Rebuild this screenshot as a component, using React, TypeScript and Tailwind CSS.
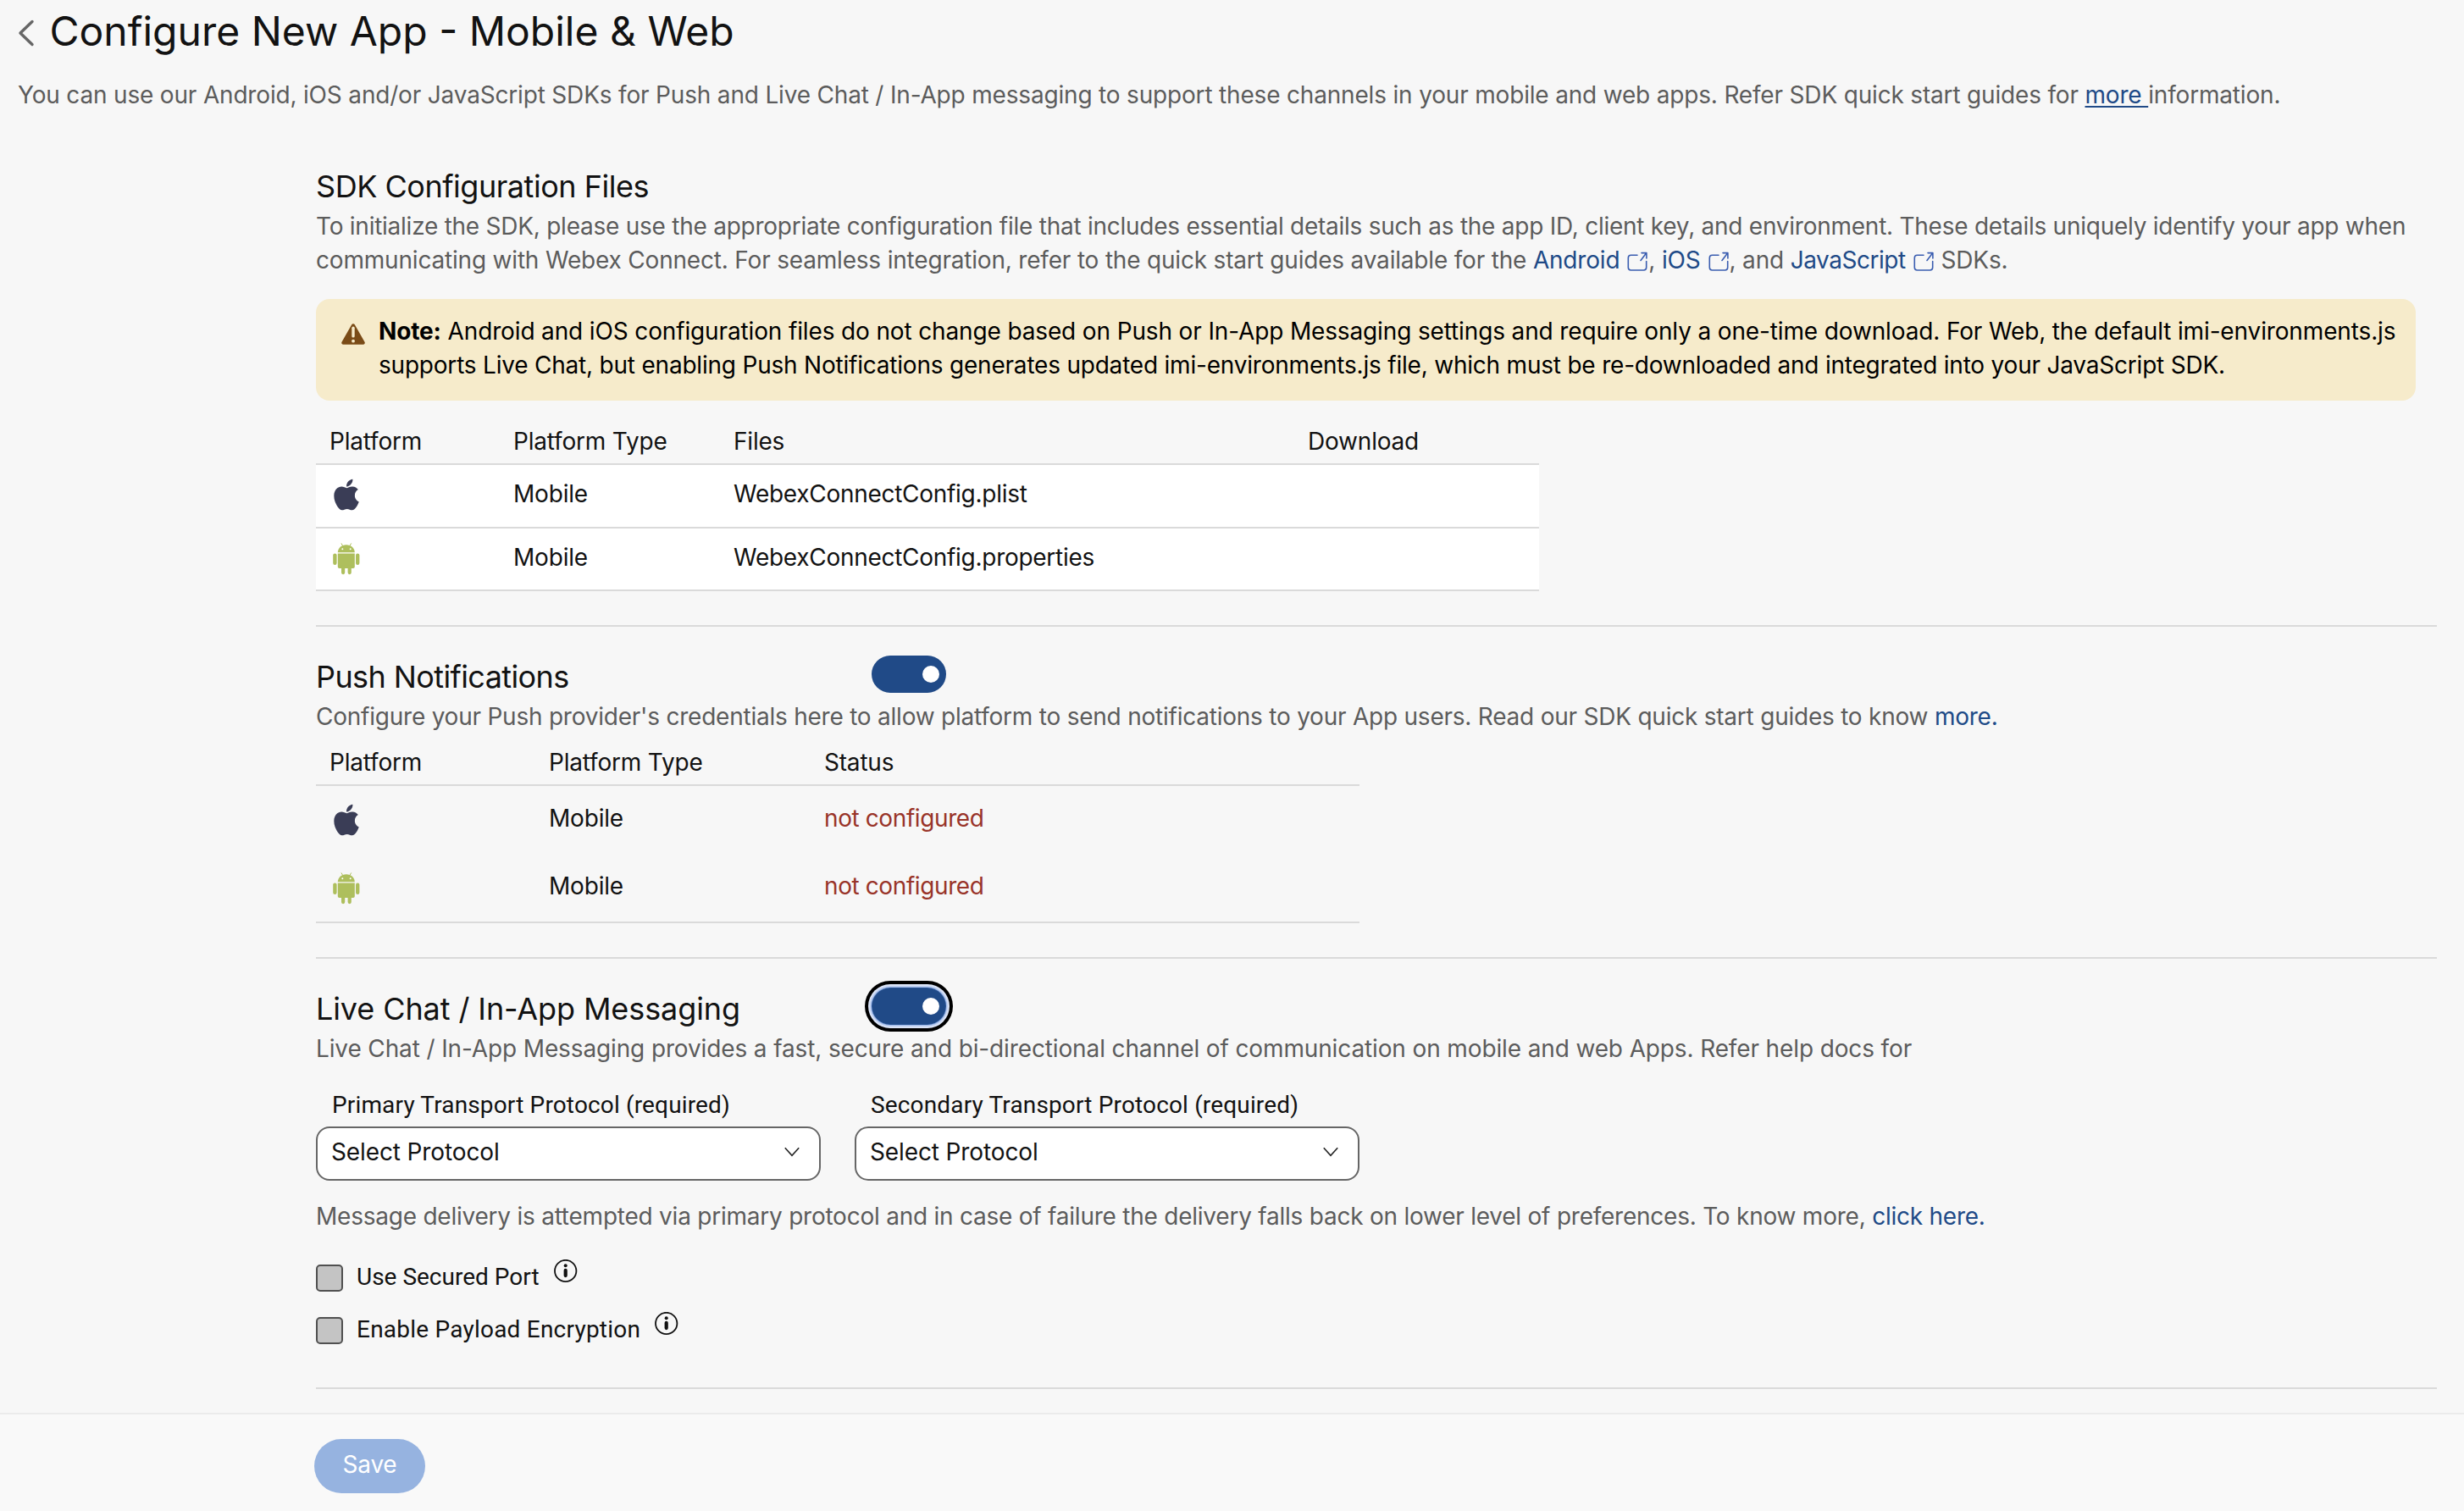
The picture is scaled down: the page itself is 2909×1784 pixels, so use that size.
import type { ReactNode } from 'react';
import { FaApple } from 'react-icons/fa';

function AppleIcon() {
  return (
    <FaApple
      className="-mt-[3px] ml-[5px] block h-[42px] w-[30px] text-[#3a3d56]"
      preserveAspectRatio="none"
    />
  );
}

function AndroidIcon() {
  return (
    <svg className="ml-1 block h-[38px] w-8 text-[#aebf5d]" viewBox="0 0 32 38" fill="currentColor">
      <path d="M5.8 11.3C5.8 6.2 10.2 2.3 15.8 2.3s10 3.9 10 9z" />
      <path d="M10.1 .8l2 3.4M21.5 .8l-2 3.4" stroke="currentColor" strokeWidth="1" strokeLinecap="round" />
      <circle cx="11.3" cy="7.3" r="1" fill="#fff" />
      <circle cx="20.7" cy="7.3" r="1" fill="#fff" />
      <path d="M5.8 12.6h20v15.6a1.8 1.8 0 0 1-1.8 1.8H7.6a1.8 1.8 0 0 1-1.8-1.8z" />
      <rect x="10" y="26" width="4.2" height="11.2" rx="2.1" />
      <rect x="17.6" y="26" width="4.2" height="11.2" rx="2.1" />
      <rect x="0.2" y="12.4" width="4.4" height="13.6" rx="2.2" />
      <rect x="27" y="12.4" width="4.4" height="13.6" rx="2.2" />
    </svg>
  );
}

function ExternalIcon() {
  return (
    <svg
      className="mr-px ml-[9px] inline-block size-6 align-[-4px] text-[#3a5db0]"
      viewBox="0 0 24 24"
      fill="none"
      stroke="currentColor"
      strokeWidth="1.6"
      strokeLinecap="round"
      strokeLinejoin="round"
    >
      <path d="M12 4.2H4.5A3.2 3.2 0 0 0 1.300 7.400v11.400A3.200 3.200 0 0 0 4.500 22h15a3.200 3.200 0 0 0 3.200-3.200V11.500" />
      <path d="M16 10.500l6.700-8.700M17 1.600h5.900v6.400" />
    </svg>
  );
}

function WarningIcon() {
  return (
    <svg className="mt-[11px] block h-[25px] w-7 shrink-0" viewBox="0 0 28 25">
      <path d="M12.200 1.200a2.100 2.100 0 0 1 3.600 0l11.700 20.500a2 2 0 0 1-1.700 3H2.200a2 2 0 0 1-1.700-3z" fill="#7a4b17" />
      <rect x="12.300" y="3.600" width="3.400" height="13" rx="1.700" fill="#f6ebcb" />
      <circle cx="14" cy="20.700" r="1.900" fill="#f6ebcb" />
    </svg>
  );
}

function InfoIcon() {
  return (
    <svg className="ml-[17px] block size-7 text-[#121212]" viewBox="0 0 28 28">
      <circle cx="13.700" cy="13.500" r="12.700" fill="none" stroke="currentColor" strokeWidth="1.800" />
      <circle cx="13.700" cy="7.300" r="2" fill="currentColor" />
      <rect x="11.600" y="10.800" width="4.200" height="10.400" rx="2.100" fill="currentColor" />
    </svg>
  );
}

function Toggle({ focused = false }: { focused?: boolean }) {
  return (
    <button
      className={
        'flex h-11 w-[88px] items-center justify-end rounded-full bg-[#204a87] pr-2 ' +
        (focused ? 'shadow-[inset_0_0_1px_#7fa3e6,0_0_0_1px_#a3bdec,0_0_0_2px_#c0d1f2,0_0_0_4px_#dbe4f7,0_0_0_8px_#000]' : '')
      }
    >
      <span className="size-5 rounded-full bg-white" />
    </button>
  );
}

function Divider() {
  return <div className="mt-10 h-0.5 bg-[#dadada]" />;
}

function Link({ children }: { children: ReactNode }) {
  return <a className="text-[#204a87]">{children}</a>;
}

function SectionHead({ title, tight, focused }: { title: string; tight?: boolean; focused?: boolean }) {
  return (
    <div className="mt-[34px] flex h-[47px] items-start">
      <h2 className={'w-[656px] pt-[3px] text-[36px] leading-[44px] ' + (tight ? 'tracking-[-0.6px]' : 'tracking-[-0.1px]')}>
        {title}
      </h2>
      <Toggle focused={focused} />
    </div>
  );
}

function SelectField({ label }: { label: string }) {
  return (
    <div className="w-[596px]">
      <div className="pt-px pl-[19px] font-['Roboto',sans-serif] tracking-[0.15px]">{label}</div>
      <div className="mt-[5px] flex h-16 items-center justify-between rounded-[16px] border-2 border-[#666] bg-white pr-[22px] pb-1 pl-4">
        <span className="tracking-[-0.12px]">Select Protocol</span>
        <svg className="h-3 w-5" viewBox="0 0 20 12" fill="none" stroke="#222" strokeWidth="1.600">
          <path d="M1.800 1.300L10 10.300l8.200-9" />
        </svg>
      </div>
    </div>
  );
}

function CheckRow({ label, tight }: { label: string; tight?: boolean }) {
  return (
    <div className="flex h-10 items-start">
      <span className="mt-1.5 size-8 rounded-[5px] border-2 border-[#505050] bg-[#c4c4c4]" />
      <span className={"ml-4 pt-px font-['Roboto',sans-serif] " + (tight ? 'tracking-[0px]' : 'tracking-[0.22px]')}>{label}</span>
      <InfoIcon />
    </div>
  );
}

const files = [
  { icon: <AppleIcon />, file: 'WebexConnectConfig.plist', height: 'h-[75px]' },
  { icon: <AndroidIcon />, file: 'WebexConnectConfig.properties', height: 'h-[74px]' },
];

export default function App() {
  return (
    <div className="flex h-[1784px] w-[2909px] flex-col overflow-hidden bg-[#f7f7f7] font-['Inter',sans-serif] text-[28px] leading-[40px] tracking-[-0.2px] whitespace-nowrap text-[#121212]">
      <header className="pt-[7px] pl-[21px]">
        <div className="flex h-[60px] items-start">
          <svg className="mt-4 h-8 w-5" viewBox="0 0 20 32" fill="none" stroke="#666" strokeWidth="3.400" strokeLinecap="round" strokeLinejoin="round">
            <path d="M17 2.500L3 16l14 13.500" />
          </svg>
          <h1 className="ml-[17.5px] text-[48px] leading-[60px] tracking-[0px]">Configure New App - Mobile &amp; Web</h1>
        </div>
        <p className="mt-[25px] tracking-[-0.18px] text-[#5c5c5c]">
          You can use our Android, iOS and/or JavaScript SDKs for Push and Live Chat / In-App messaging to support these
          channels in your mobile and web apps. Refer SDK quick start guides for{' '}
          <a className="text-[#204a87] underline decoration-2 underline-offset-[3px]">more </a>
          information.
        </p>
      </header>

      <main className="ml-[373px] w-[2504px] flex-1">
        <section>
          <h2 className="mt-[66px] text-[36px] leading-[44px] tracking-[-0.47px]">SDK Configuration Files</h2>
          <p className="mt-[5px] tracking-[-0.19px] text-[#5c5c5c]">
            <span className="tracking-[-0.25px]">
              To initialize the SDK, please use the appropriate configuration file that includes essential details such as
              the app ID, client key, and environment. These details uniquely identify your app when
            </span>
            <br />
            communicating with Webex Connect. For seamless integration, refer to the quick start guides available for the{' '}
            <Link>
              Android
              <ExternalIcon />
            </Link>
            ,{' '}
            <Link>
              iOS
              <ExternalIcon />
            </Link>
            , and{' '}
            <Link>
              <span className="tracking-[-0.45px]">JavaScript</span>
              <ExternalIcon />
            </Link>{' '}
            SDKs.
          </p>

          <div className="mt-[26px] flex h-[120px] w-[2479px] items-start rounded-[16px] bg-[#f6ebcb] pt-[18px] pl-[30px] text-black">
            <WarningIcon />
            <p className="ml-4">
              <span className="tracking-[-0.14px]">
                <b className="font-bold">Note:</b> Android and iOS configuration files do not change based on Push or In-App
                Messaging settings and require only a one-time download. For Web, the default imi-environments.js
              </span>
              <br />
              <span className="tracking-[-0.21px]">
                supports Live Chat, but enabling Push Notifications generates updated imi-environments.js file, which must be
                re-downloaded and integrated into your JavaScript SDK.
              </span>
            </p>
          </div>

          <div className="mt-7 w-[1444px]">
            <div className="grid h-12 grid-cols-[217px_260px_678px_1fr] border-b-2 border-[#dadada] pl-4">
              <span>Platform</span>
              <span>Platform Type</span>
              <span>Files</span>
              <span>Download</span>
            </div>
            {files.map((f) => (
              <div
                key={f.file}
                className={
                  'grid grid-cols-[217px_260px_1fr] border-b-2 border-[#dadada] bg-white pt-3.5 pl-4 ' + f.height
                }
              >
                <span className="pt-[3px]">{f.icon}</span>
                <span>Mobile</span>
                <span className="tracking-[-0.28px]">{f.file}</span>
              </div>
            ))}
          </div>
          <Divider />
        </section>

        <section>
          <SectionHead title="Push Notifications" tight />
          <p className="mt-[5px] tracking-[-0.23px] text-[#5c5c5c]">
            Configure your Push provider's credentials here to allow platform to send notifications to your App users. Read
            our SDK quick start guides to know <Link>more.</Link>
          </p>
          <div className="mt-3.5 w-[1232px] border-b-2 border-[#dadada]">
            <div className="grid h-12 grid-cols-[259px_325px_1fr] border-b-2 border-[#dadada] pl-4">
              <span>Platform</span>
              <span>Platform Type</span>
              <span>Status</span>
            </div>
            {[<AppleIcon key="apple" />, <AndroidIcon key="android" />].map((icon) => (
              <div key={icon.key} className="grid h-20 grid-cols-[259px_325px_1fr] pt-[18px] pl-4">
                <span className="pt-1">{icon}</span>
                <span>Mobile</span>
                <span className="tracking-[-0.4px] text-[#993429]">not configured</span>
              </div>
            ))}
          </div>
          <Divider />
        </section>

        <section>
          <SectionHead title="Live Chat / In-App Messaging" focused />
          <p className="mt-[5px] tracking-[-0.13px] text-[#5c5c5c]">
            Live Chat / In-App Messaging provides a fast, secure and bi-directional channel of communication on mobile and web
            Apps. Refer help docs for
          </p>
          <div className="mt-[26px] flex gap-10">
            <SelectField label="Primary Transport Protocol (required)" />
            <SelectField label="Secondary Transport Protocol (required)" />
          </div>
          <p className="mt-[22px] tracking-[-0.235px] text-[#5c5c5c]">
            Message delivery is attempted via primary protocol and in case of failure the delivery falls back on lower level of
            preferences. To know more, <Link>click here.</Link>
          </p>
          <div className="mt-[31px] flex flex-col gap-[22px]">
            <CheckRow label="Use Secured Port" tight />
            <CheckRow label="Enable Payload Encryption" />
          </div>
          <div className="mt-[49px] h-0.5 bg-[#dadada]" />
        </section>
      </main>

      <footer className="h-[116px] border-t-2 border-[#ebebeb] bg-[#f9f9f9] pt-[29px] pl-[371px]">
        <button className="flex h-16 w-[131px] items-center justify-center rounded-full bg-[#96b3e0] pb-1 text-white">
          Save
        </button>
      </footer>
    </div>
  );
}
